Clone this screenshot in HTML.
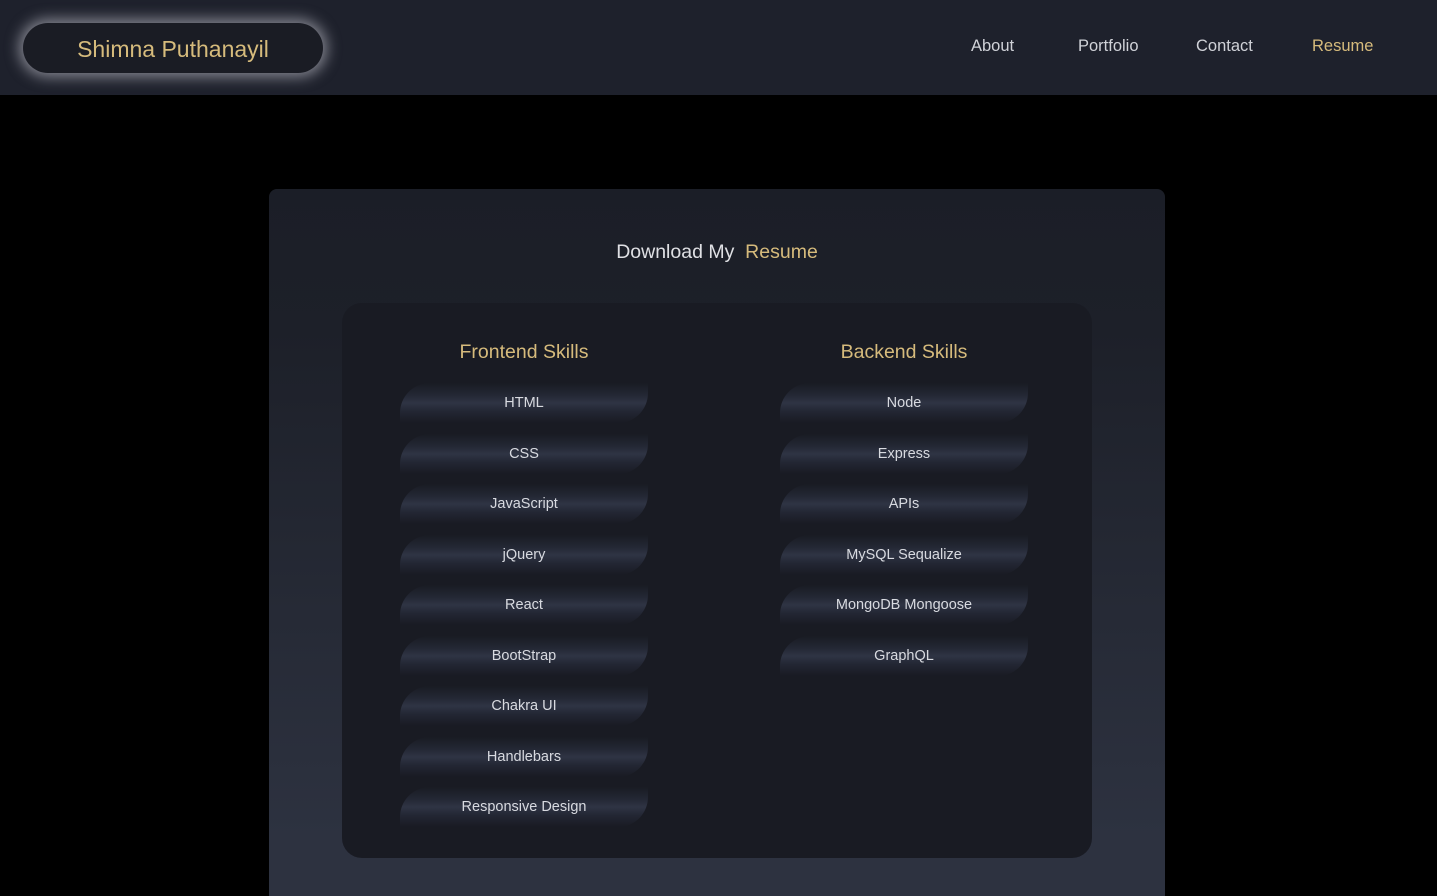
<!DOCTYPE html>
<html><head><style>
*{margin:0;padding:0;box-sizing:border-box}
html,body{width:1437px;height:896px;overflow:hidden}
body{background:#000;font-family:"Liberation Sans",sans-serif;position:relative}
.hdr{position:absolute;left:0;top:0;width:1437px;height:95px;background:#1e212c}
.logo{position:absolute;left:23px;top:23px;width:300px;height:50px;border-radius:25px;background:#1a1c24;box-shadow:0 0 14px 4px rgba(200,200,210,.6);color:#d6bb7c;font-size:23px;text-align:center;line-height:52px}
.nav a{position:absolute;top:37px;font-size:16.5px;color:#d0d2d8;text-decoration:none}
.card{position:absolute;left:269px;top:189px;width:896px;height:707px;border-radius:8px 8px 0 0;background:linear-gradient(#1b1e27,#1d2029 20%,#2d3240 92%)}
.title{position:absolute;left:0;width:896px;top:52px;text-align:center;font-size:19.5px;color:#dfe0e4}
.title span{color:#d6bb7c}
.inner{position:absolute;left:73px;top:114px;width:750px;height:555px;border-radius:20px;background:#191b23}
.col{position:absolute;top:0;width:248px}
.col h3{position:absolute;top:38px;width:248px;text-align:center;font-weight:normal;font-size:19.5px;color:#d6bb7c}
.pill{position:absolute;left:0;width:248px;height:40px;border-radius:30px 0 30px 0;background:linear-gradient(#191b23 0%,#232734 30%,#2f3444 50%,#232734 70%,#191b23 100%);color:#d8dae0;font-size:14.5px;text-align:center;line-height:40px}
</style></head><body>
<div class="hdr">
<div class="logo">Shimna Puthanayil</div>
<div class="nav"><a style="left:971px">About</a><a style="left:1078px">Portfolio</a><a style="left:1196px">Contact</a><a style="left:1312px;color:#d6bb7c">Resume</a></div>
</div>
<div class="card">
<div class="title">Download My&nbsp; <span>Resume</span></div>
<div class="inner">
<div class="col" style="left:58px"><h3>Frontend Skills</h3>
<div class="pill" style="top:80px">HTML</div>
<div class="pill" style="top:131px">CSS</div>
<div class="pill" style="top:181px">JavaScript</div>
<div class="pill" style="top:232px">jQuery</div>
<div class="pill" style="top:282px">React</div>
<div class="pill" style="top:333px">BootStrap</div>
<div class="pill" style="top:383px">Chakra UI</div>
<div class="pill" style="top:434px">Handlebars</div>
<div class="pill" style="top:484px">Responsive Design</div>
</div>
<div class="col" style="left:438px"><h3>Backend Skills</h3>
<div class="pill" style="top:80px">Node</div>
<div class="pill" style="top:131px">Express</div>
<div class="pill" style="top:181px">APIs</div>
<div class="pill" style="top:232px">MySQL Sequalize</div>
<div class="pill" style="top:282px">MongoDB Mongoose</div>
<div class="pill" style="top:333px">GraphQL</div>
</div>
</div>
</div>
</body></html>
